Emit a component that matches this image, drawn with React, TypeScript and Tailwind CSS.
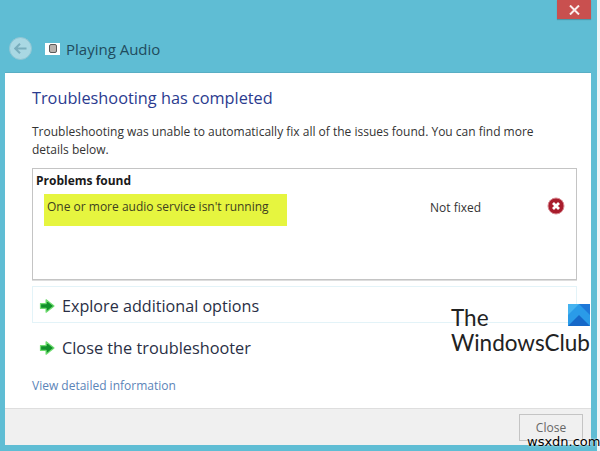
const ui = { fontFamily: '"Open Sans", "Noto Sans", sans-serif' };

function GreenArrow() {
  return (
    <svg width="16" height="16" viewBox="0 0 16 16" className="shrink-0">
      <path d="M1.5 5.6h5.6V1.8L15 8l-7.9 6.2V10.4H1.5z" fill="#10912a" stroke="#6fdc6f" strokeWidth="1.2" strokeLinejoin="round" />
    </svg>
  );
}

export default function App() {
  return (
    <div className="relative flex h-[451px] w-[600px] flex-col overflow-hidden bg-[#5fbdd4]" style={ui}>
      <div className="flex h-[72px] shrink-0 flex-col pr-[9px]">
        <div className="flex justify-end">
          <div className="flex h-[19px] w-[34px] items-center justify-center bg-[#c9504f] shadow-[0_1px_1px_rgba(0,0,0,0.2)]">
            <svg width="11" height="10" viewBox="0 0 11 10">
              <path d="M1 0.5l9 9M10 0.5l-9 9" stroke="#fbeeee" strokeWidth="2" />
            </svg>
          </div>
        </div>
        <div className="mt-[18px] flex items-center pl-[9px]">
          <div className="flex h-[23px] w-[23px] items-center justify-center rounded-full border border-[#8fc5d3] bg-[#a9d8e3]">
            <svg width="13" height="11" viewBox="0 0 13 11">
              <path d="M6 0.8L1.2 5.5 6 10.2M1.5 5.5h11" fill="none" stroke="#79aebd" strokeWidth="2" />
            </svg>
          </div>
          <div className="ml-[13px] flex h-[12px] w-[15px] items-center justify-center bg-white">
            <div className="h-[9px] w-[8px] rounded-[2px] border border-[#5c5a5a] bg-[#b9b3ae]" />
          </div>
          <span className="ml-[6px] text-[15px] leading-[20px] text-[#1f4c5e]">Playing Audio</span>
        </div>
      </div>

      <div className="ml-[5px] flex w-[586px] flex-1 flex-col border-t border-[#58aec4] bg-white">
        <div className="flex flex-1 flex-col pl-[27px] pr-[14px]">
          <h1 className="mt-[14px] text-[16.3px] leading-[22px] text-[#2b3b8f]">Troubleshooting has completed</h1>
          <p className="mt-[14px] max-w-[510px] text-[12px] leading-[18px] text-[#333]">
            Troubleshooting was unable to automatically fix all of the issues found. You can find more details below.
          </p>
          <div className="relative mt-[9px] h-[112px] border border-[#c4c4c4] pl-[3px] pt-[3px] shadow-[0_1px_0_#ddd]">
            <div className="text-[12px] font-bold leading-[17px] text-[#1a1a1a]">Problems found</div>
            <div className="ml-[8px] mt-[5px] flex h-[32px] w-[243px] items-start bg-[#e6f53f] pl-[3px] pt-[4px] text-[12px] leading-[17px] text-[#3d4020]">
              One or more audio service isn't running
            </div>
            <div className="absolute left-[397px] top-[30px] text-[12px] leading-[17px] text-[#333]">Not fixed</div>
            <svg width="18" height="18" viewBox="0 0 18 18" className="absolute left-[514px] top-[28px]">
              <circle cx="9" cy="9" r="8" fill="#a81c2c" stroke="#d98a92" strokeWidth="1" />
              <path d="M6 6l6 6M12 6l-6 6" stroke="#fff" strokeWidth="2.8" />
            </svg>
          </div>
          <div className="mt-[6px] flex h-[37px] items-center gap-[7px] border border-[#e3f3f8] pl-[6px] pt-[3px] text-[16.15px] text-[#2a2f45]">
            <GreenArrow />
            <span>Explore additional options</span>
          </div>
          <div className="mt-[7px] flex h-[36px] items-center gap-[7px] pl-[7px] text-[16.3px] text-[#2a2f45]">
            <GreenArrow />
            <span>Close the troubleshooter</span>
          </div>
          <div className="mt-[11px] text-[12px] leading-[17px] text-[#5b84b8]">View detailed information</div>
        </div>
        <div className="flex h-[37px] shrink-0 justify-end border-t border-[#dedede] bg-[#f0f0f0] pr-[8px] pt-[5px]">
          <div className="flex h-[27px] w-[64px] items-center justify-center border border-[#c4c4c4] text-[12px] text-[#666]">Close</div>
        </div>
      </div>
      <div className="h-[6px] shrink-0" />

      <div className="absolute right-0 top-0 h-full w-[3px] bg-[#eef5f7]" />
      <div className="absolute left-[451px] top-[305px] text-[22.5px] leading-[25px] text-[#222]" style={{ fontFamily: '"Lato", sans-serif' }}>
        The<br />WindowsClub
      </div>
      <svg width="22" height="22" viewBox="0 0 22 22" className="absolute left-[568px] top-[304px]">
        <path d="M0 0h22v22H0z" fill="#2a9be8" />
        <path d="M0 0h11l-11 11z" fill="#45b3f0" />
        <path d="M22 0v11L11 0z" fill="#1e78d8" />
        <path d="M0 22L11 11l11 11z" fill="#1668c8" />
      </svg>
      <div className="absolute left-[527px] top-[434px] text-[13px] leading-[15px] text-black [text-shadow:0_0_2px_#fff]" style={{ fontFamily: '"DejaVu Sans", sans-serif' }}>
        wsxdn.com
      </div>
    </div>
  );
}
